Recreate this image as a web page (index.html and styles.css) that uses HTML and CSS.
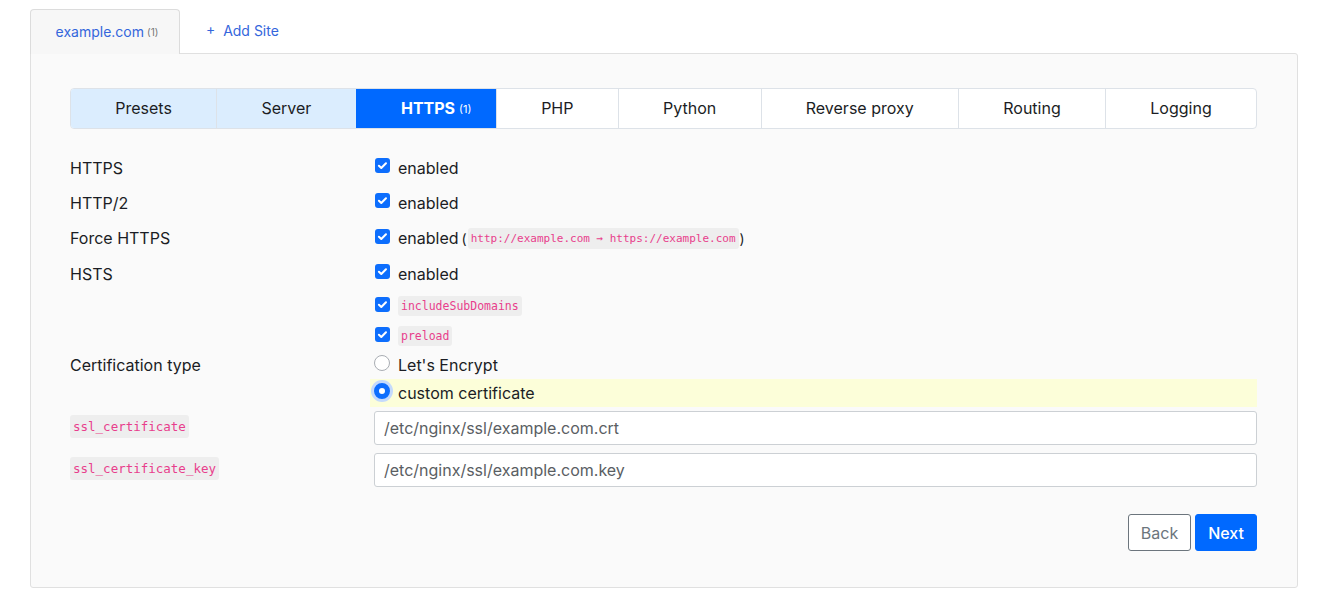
FILE: index.html
```html
<!DOCTYPE html>
<html>
<head>
<meta charset="utf-8">
<link rel="stylesheet" href="styles.css">
</head>
<body>
<div class="page">
  <div class="site-tabs">
    <div class="site-tab active">example.com <span class="count">(1)</span></div>
    <div class="site-tab add">+&nbsp; Add Site</div>
  </div>
  <div class="panel">
    <div class="tabs">
      <div class="tab done">Presets</div>
      <div class="tab done">Server</div>
      <div class="tab active">HTTPS <span class="count">(1)</span></div>
      <div class="tab">PHP</div>
      <div class="tab">Python</div>
      <div class="tab">Reverse proxy</div>
      <div class="tab">Routing</div>
      <div class="tab">Logging</div>
    </div>

    <div class="form">
      <div class="row h35">
        <div class="label">HTTPS</div>
        <div class="control"><span class="check"></span><span>enabled</span></div>
      </div>
      <div class="row h35">
        <div class="label">HTTP/2</div>
        <div class="control"><span class="check"></span><span>enabled</span></div>
      </div>
      <div class="row h36">
        <div class="label">Force HTTPS</div>
        <div class="control"><span class="check"></span><span>enabled</span><span class="paren">(<code class="small">http://example.com → https://example.com</code>)</span></div>
      </div>
      <div class="row h35">
        <div class="label">HSTS</div>
        <div class="control"><span class="check"></span><span>enabled</span></div>
      </div>
      <div class="row h30">
        <div class="label"></div>
        <div class="control"><span class="check"></span><code class="small sub">includeSubDomains</code></div>
      </div>
      <div class="row h30">
        <div class="label"></div>
        <div class="control"><span class="check"></span><code class="small sub">preload</code></div>
      </div>
      <div class="row h28">
        <div class="label">Certification type</div>
        <div class="control"><span class="radio"></span><span>Let's Encrypt</span></div>
      </div>
      <div class="row h28">
        <div class="label"></div>
        <div class="control selected"><span class="radio on"></span><span>custom certificate</span></div>
      </div>
      <div class="row h42">
        <div class="label"><code class="lbl">ssl_certificate</code></div>
        <div class="control"><input class="text" value="/etc/nginx/ssl/example.com.crt"></div>
      </div>
      <div class="row h42">
        <div class="label"><code class="lbl">ssl_certificate_key</code></div>
        <div class="control"><input class="text" value="/etc/nginx/ssl/example.com.key"></div>
      </div>
    </div>

    <div class="actions">
      <button class="btn back">Back</button>
      <button class="btn next">Next</button>
    </div>
  </div>
</div>
</body>
</html>
```

FILE: styles.css
```css
* { box-sizing: border-box; }
body {
  margin: 0;
  background: #fff;
  font-family: "Inter", "Liberation Sans", sans-serif;
  color: #1b1d24;
}
.page {
  padding: 9px 32px 0 30px;
}
.site-tabs {
  display: flex;
  align-items: flex-end;
  height: 44px;
}
.site-tab {
  height: 44px;
  display: flex;
  align-items: center;
  padding-bottom: 2px;
  font-size: 14px;
  color: #3466dc;
}
.site-tab.active {
  width: 150px;
  justify-content: center;
  background: #f7f7f7;
  border: 1px solid #dcdcdc;
  border-bottom: none;
  border-radius: 4px 4px 0 0;
  position: relative;
  z-index: 1;
  height: 45px;
  margin-bottom: -1px;
  padding-left: 4px;
}
.site-tab .count {
  font-size: 10px;
  color: #777;
  margin-left: 3px;
  margin-top: 2px;
}
.site-tab.add {
  padding-left: 26px;
}
.panel {
  background: #fafafa;
  border: 1px solid #e0e0e0;
  border-radius: 0 3px 3px 3px;
  padding: 34px 40px 36px 39px;
}
.tabs {
  display: flex;
  height: 41px;
  border: 1px solid #dde2e8;
  border-radius: 4px;
  overflow: hidden;
  background: #fff;
}
.tab {
  flex: 1 1 auto;
  display: flex;
  align-items: center;
  justify-content: center;
  padding-bottom: 2px;
  font-size: 16px;
  color: #1b1d24;
  border-left: 1px solid #dde2e8;
  white-space: nowrap;
}
.tab:first-child { border-left: none; }
.tab.done { background: #dbedfe; }
.tab.active {
  background: #0069ff;
  color: #fff;
  font-weight: 700;
  border-left-color: #0069ff;
}
.tab .count {
  font-size: 11px;
  font-weight: 400;
  margin-left: 4px;
  margin-top: 3px;
  margin-right: -20px;
}
.form {
  margin-top: 21px;
}
.row {
  display: flex;
  align-items: center;
}
.h35 { height: 35px; }
.h36 { height: 36px; }
.h30 { height: 30px; }
.h28 { height: 28px; }
.h42 { height: 42px; }
.label {
  width: 304px;
  flex: none;
  font-size: 16px;
}
.control {
  flex: 1;
  display: flex;
  align-items: center;
  font-size: 16px;
  height: 100%;
}
.control.selected {
  background: #fcfed9;
  margin-left: -4px;
  padding-left: 4px;
}
.check {
  width: 15px;
  height: 15px;
  border-radius: 3px;
  background: #0d6efd url("data:image/svg+xml,%3Csvg xmlns='http://www.w3.org/2000/svg' viewBox='0 0 16 16'%3E%3Cpath d='M4.2 8.3l2.5 2.4 5-5' fill='none' stroke='%23fff' stroke-width='2.2' stroke-linecap='round' stroke-linejoin='round'/%3E%3C/svg%3E") center/100% no-repeat;
  margin: 0 8px 0 1px;
  flex: none;
  position: relative;
  top: -2px;
}
.radio {
  width: 16px;
  height: 16px;
  border-radius: 50%;
  border: 1px solid #a9adb3;
  background: #fff;
  margin: 0 8px 0 0;
  flex: none;
  position: relative;
  top: -2px;
}
.radio.on {
  border: 5px solid #0d6efd;
  box-shadow: 0 0 0 3px #c4dafc;
}
code {
  font-family: "DejaVu Sans Mono", "Liberation Mono", monospace;
  color: #e83e8c;
  background: #eeeeee;
  border-radius: 3px;
}
code.small {
  font-size: 11px;
  padding: 4px 3px;
}
code.small.sub {
  font-size: 11.5px;
  padding: 3px 3px;
}
.paren {
  display: flex;
  align-items: center;
  margin-left: 3px;
  font-size: 14px;
}
.paren code { margin: 0 1px; }
code.lbl {
  font-size: 12.5px;
  padding: 4px 3px;
  display: inline-block;
  position: relative;
  top: -2px;
}
input.text {
  width: 100%;
  height: 34px;
  border: 1px solid #ccd0d4;
  border-radius: 3px;
  padding: 0 9px;
  font: inherit;
  font-size: 16px;
  color: #5a5e63;
  background: #fff;
}
.actions {
  display: flex;
  justify-content: flex-end;
  gap: 4px;
  margin-top: 23px;
}
.btn {
  height: 37px;
  padding: 0 12px;
  font: inherit;
  font-size: 16px;
  border-radius: 3px;
  cursor: pointer;
}
.btn.back {
  background: #fff;
  border: 1px solid #6c757d;
  color: #6c757d;
}
.btn.next {
  background: #0069ff;
  border: 1px solid #0069ff;
  color: #fff;
  font-weight: 500;
}
```
